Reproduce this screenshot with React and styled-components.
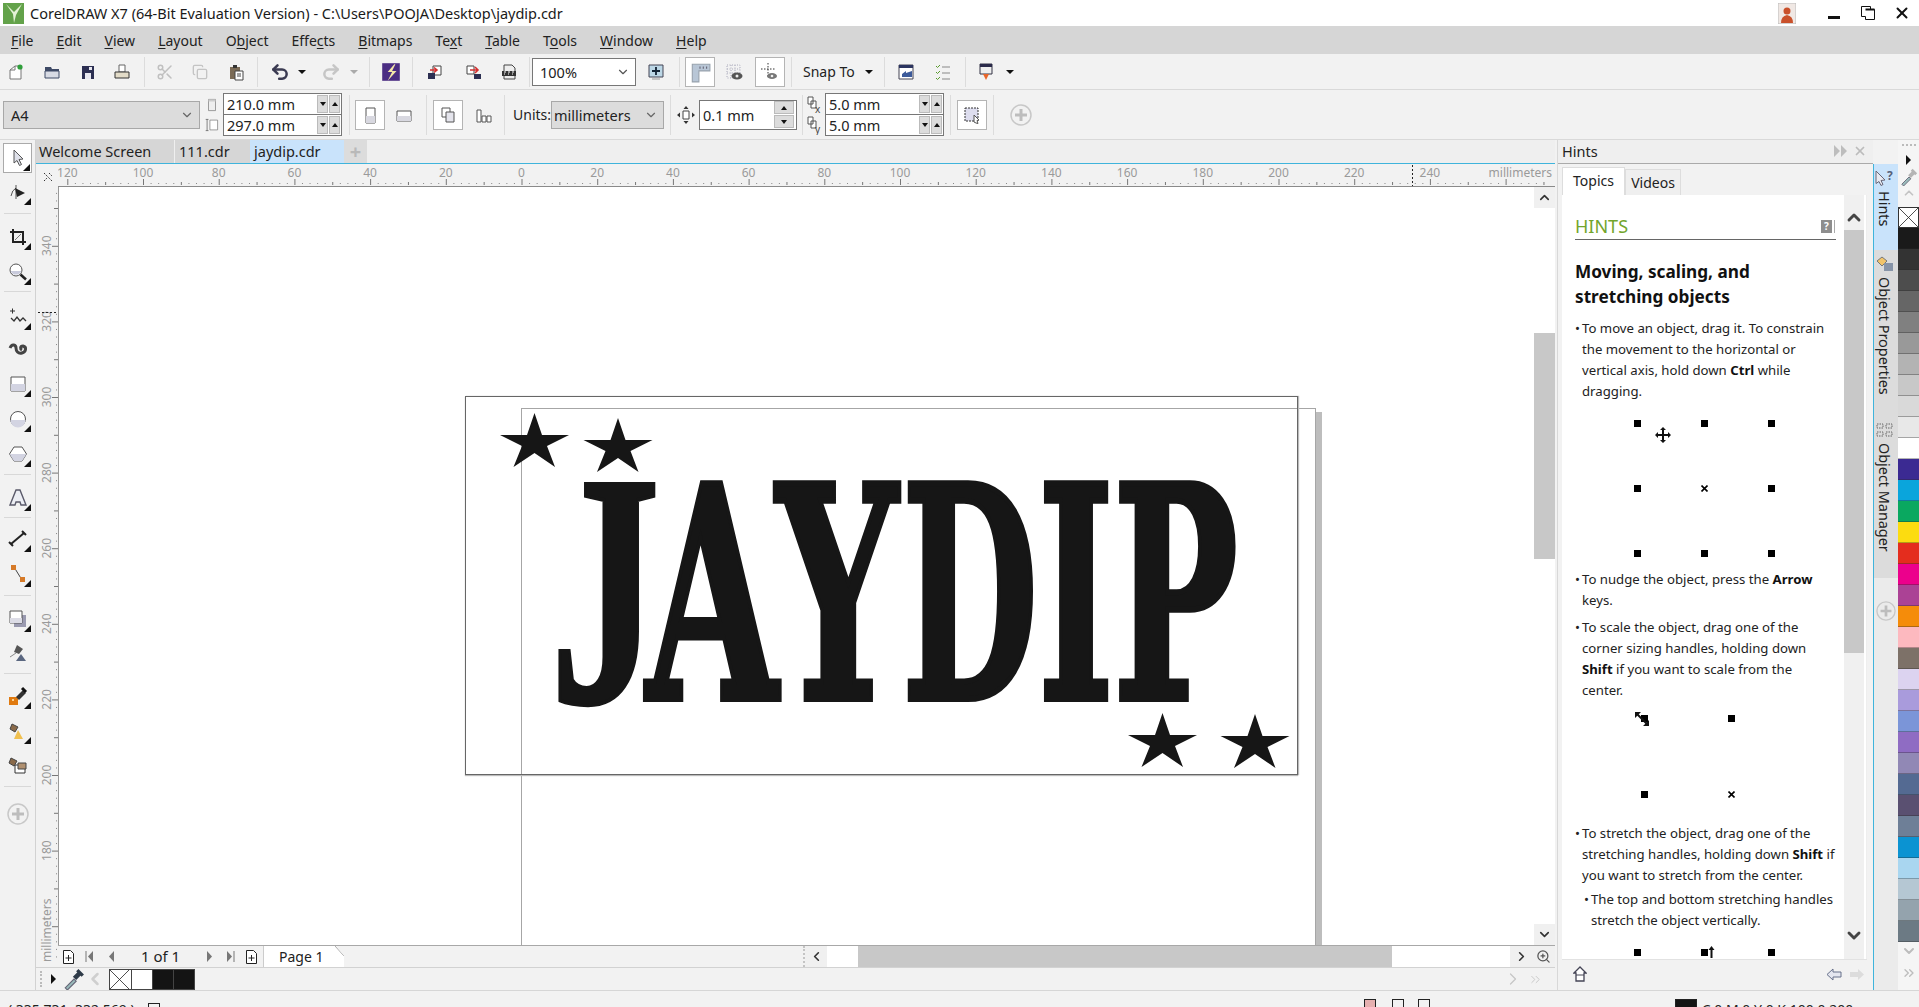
import React from 'react';
import styled, { createGlobalStyle } from 'styled-components';
import { Scissors, Undo2, Redo2, ChevronUp, ChevronDown, ChevronLeft, ChevronRight, ChevronsRight, X, Copy, ZoomIn } from 'lucide-react';

const UI = '"Noto Sans", "Open Sans", sans-serif';

const Global = createGlobalStyle`
  html, body { margin: 0; padding: 0; background: #f2f2f2; overflow: hidden; }
  * { box-sizing: border-box; }
  #root { width: 1919px; height: 1007px; }
`;

const Shell = styled.div`
  width: 1919px; height: 1007px; overflow: hidden; display: flex; flex-direction: column;
  font: 14px ${UI}; color: #222; background: #f2f2f2;
`;

/* title + menu */
const TitleBar = styled.div`
  height: 26px; background: #fff; display: flex; align-items: center; padding-left: 3px; flex: none;
`;
const TitleText = styled.div`margin-left: 6px; font-size: 14.5px; white-space: nowrap; flex: 1; color: #1a1a1a;`;
const WinBtn = styled.div`
  width: ${p => p.$w}px; height: 26px; display: flex; align-items: center; justify-content: center; flex: none;
  margin-left: ${p => p.$ml || 0}px;
`;
const MenuBar = styled.div`
  height: 28px; background: #d6d6d6; display: flex; align-items: center; gap: 23px; padding-left: 11px; flex: none;
  font-size: 14px; color: #222;
  u { text-underline-offset: 2px; }
`;

/* toolbars */
const Bar = styled.div`
  height: ${p => p.$h}px; flex: none; display: flex; align-items: center; background: #f2f2f2;
  border-bottom: 1px solid #d9d9d9;
`;
const Slot = styled.div`
  width: ${p => p.$w}px; margin-left: ${p => p.$ml || 0}px; height: ${p => p.$tall ? 43 : 30}px; flex: none;
  display: flex; flex-direction: ${p => p.$tall ? 'column' : 'row'}; align-items: center; justify-content: center;
  ${p => p.$on && 'background: #fff; border: 1px solid #b4b4b4;'}
`;
const Sep = styled.div`
  width: 1px; height: ${p => p.$h || 30}px; background: #dcdcdc; flex: none; margin-left: ${p => p.$ml || 0}px;
`;
const Drop = styled.div`
  width: ${p => p.$w}px; height: ${p => p.$h}px; margin-left: ${p => p.$ml || 0}px; flex: none;
  background: ${p => p.$bg}; border: 1px solid ${p => p.$line};
  display: flex; align-items: center; justify-content: space-between; padding: 0 5px 0 ${p => p.$pl || 7}px; font-size: 14.5px;
`;
const Caret = styled.div`
  width: 0; height: 0; border-left: 4px solid transparent; border-right: 4px solid transparent;
  border-top: 4px solid ${p => p.$c || '#111'}; flex: none;
`;
const SnapLabel = styled.div`width: 52px; margin-left: 11px; font-size: 14px; white-space: nowrap; flex: none;`;
const UnitsLabel = styled.div`width: 38px; margin-left: 8px; font-size: 14px; flex: none;`;

const SpinBox = styled.div`
  width: ${p => p.$w}px; margin-left: ${p => p.$ml || 0}px; height: 43px; flex: none;
  border: 1px solid #777; background: #fff; display: flex; flex-direction: column;
`;
const SpinRow = styled.div`
  flex: 1; display: flex; align-items: center; padding-left: 3px; font-size: 14.5px; justify-content: space-between;
  & + & { border-top: 1px solid #777; }
`;
const SpinBtns = styled.div`display: flex; gap: 1px; padding-right: 1px;`;
const SpinBtn = styled.div`
  width: 11px; height: 18px; background: #dcdcdc; border: 1px solid #bbb;
  display: flex; align-items: center; justify-content: center;
`;
const Tri = styled.div`
  width: 0; height: 0; border-left: 3.5px solid transparent; border-right: 3.5px solid transparent;
  ${p => p.$up ? 'border-bottom: 4px solid #111;' : 'border-top: 4px solid #111;'}
`;
const Nudge = styled.div`
  width: 98px; height: 30px; margin-left: 2px; flex: none; border: 1px solid #777; background: #fff;
  display: flex; align-items: center; justify-content: space-between; padding-left: 3px; font-size: 14.5px;
`;
const NudgeBtns = styled.div`display: flex; flex-direction: column; gap: 1px; padding-right: 2px;`;
const NudgeBtn = styled.div`
  width: 20px; height: 13px; background: #dcdcdc; border: 1px solid #bbb;
  display: flex; align-items: center; justify-content: center;
`;
const Gap = styled.div`height: ${p => p.$h}px; flex: none;`;

/* workspace */
const Workspace = styled.div`flex: 1; display: flex; min-height: 0;`;
const Toolbox = styled.div`
  width: 36px; flex: none; padding-top: 1px; display: flex; flex-direction: column; align-items: stretch;
  border-right: 1px solid #d2d2d2; background: #f2f2f2;
`;
const Tool = styled.div`
  height: ${p => p.$h}px; position: relative; display: flex; align-items: center; justify-content: center; flex: none;
  ${p => p.$on && 'background: #fff; border: 1px solid #aaa; margin: 2px 3px 2px 3px; height: 30px;'}
  ${p => p.$more && `&::after {
    content: ''; position: absolute; right: ${p.$on ? 1 : 4}px; top: calc(50% + 6px);
    border-left: 7px solid transparent; border-bottom: 7px solid #111;
  }`}
`;
const ToolSep = styled.div`
  height: 1px; background: #d8d8d8; margin: ${p => p.$t}px 4px ${p => p.$b}px 4px; flex: none;
`;

const DocColumn = styled.div`width: 1519px; flex: none; display: flex; flex-direction: column;`;
const TabRow = styled.div`
  height: 24px; flex: none; display: flex; background: #efefef; border-bottom: 1px solid #3fb4dc;
`;
const DocTab = styled.div`
  width: ${p => p.$w}px; flex: none; background: ${p => p.$on ? '#c9e3fb' : '#d6d6d6'};
  margin-right: ${p => p.$gap || 0}px; padding: 0 0 2px ${p => p.$pad || 3}px; display: flex; align-items: center;
  font-size: 14.5px; white-space: nowrap;
`;
const PlusTab = styled.div`
  width: 23px; flex: none; background: #dcdcdc; display: flex; align-items: center; justify-content: center;
  color: #b9b9b9; font-size: 20px; font-weight: 700; line-height: 1;
`;
const DocBody = styled.div`flex: 1; display: flex; min-height: 0;`;
const VRuler = styled.svg`width: 22px; flex: none; display: block;`;
const DocMain = styled.div`flex: 1; display: flex; flex-direction: column; min-width: 0;`;
const HRuler = styled.svg`height: 23px; width: 100%; flex: none; display: block; border-bottom: 1px solid #8a8a8a;`;
const CanvasRow = styled.div`flex: 1; display: flex; min-height: 0;`;
const Canvas = styled.div`
  flex: 1; position: relative; overflow: hidden; background: #fff; border-left: 1px solid #999;
`;
const Page = styled.div`
  position: absolute; left: 462px; top: 221px; width: 795px; height: 900px;
  border: 1px solid #a6a6a6; background: #fff;
`;
const PageShadow = styled.div`
  position: absolute; left: 1257px; top: 225px; width: 6px; height: 900px; background: #bdbdbd;
`;
const ObjectFrame = styled.div`
  position: absolute; left: 406px; top: 209px; width: 833px; height: 379px;
  border: 1px solid #666; box-shadow: 0 1px 1px #bbb, 1px 0 1px #bbb;
`;
const Artwork = styled.svg`position: absolute; left: 0; top: 0; width: 1476px; height: 758px;`;

const VScroll = styled.div`
  width: 21px; flex: none; background: #fff; display: flex; flex-direction: column;
`;
const ScrollCap = styled.div`
  height: 21px; flex: none; background: #f0f0f0; display: flex; align-items: center; justify-content: center; color: #333;
`;
const VThumb = styled.div`height: 226px; background: #c8c8c8; flex: none;`;
const Grow = styled.div`flex: 1;`;

const PageBar = styled.div`
  height: 22px; flex: none; display: flex; align-items: stretch; background: #f2f2f2;
  border-top: 1px solid #a8a8a8;
`;
const NavIcon = styled.div`
  width: ${p => p.$w}px; flex: none; display: flex; align-items: center; justify-content: center;
`;
const PageCount = styled.div`
  width: 59px; margin-left: 20px; flex: none; font-size: 15px; display: flex; align-items: center; white-space: nowrap;
  padding-bottom: 1px;
`;
const PageTab = styled.div`
  width: 81px; flex: none; margin-left: 1px; background: #fff; position: relative;
  border-left: 1px solid #ccc; font-size: 14px; display: flex; align-items: center; padding: 0 0 1px 15px;
  clip-path: polygon(0 0, 90% 0, 100% 45%, 100% 100%, 0 100%);
`;
const TabFold = styled.svg`position: absolute; right: 0; top: 0;`;
const PageFill = styled.div`width: 461px; flex: none; background: #f2f2f2; border-right: 2px dotted #c4c4c4;`;
const HScroll = styled.div`flex: 1; display: flex; background: #fff; align-items: stretch;`;
const HCap = styled.div`
  width: ${p => p.$w}px; flex: none; background: #f0f0f0; display: flex; align-items: center; justify-content: center; color: #333;
`;
const HGap = styled.div`width: ${p => p.$w}px; flex: none;`;
const HThumb = styled.div`width: 534px; flex: none; background: #c8c8c8;`;

const ColorBar = styled.div`
  height: 23px; flex: none; display: flex; align-items: center; background: #f2f2f2;
  border-top: 1px solid #d2d2d2; padding-left: 4px;
`;
const Grip = styled.div`width: 2px; height: 16px; border-left: 2px dotted #bbb; flex: none;`;
const ArrowRight = styled.div`
  width: 0; height: 0; border-top: 5px solid transparent; border-bottom: 5px solid transparent;
  border-left: 5px solid #111; flex: none; margin: ${p => p.$mt || 0}px 0 0 ${p => p.$ml || 0}px;
`;
const DropperWrap = styled.div`margin: ${p => p.$mt || 0}px 0 0 ${p => p.$ml || 0}px; flex: none;`;
const Swatches = styled.div`display: flex; height: 21px; margin-left: 4px; border: 1px solid #444; flex: none;`;
const MiniSwatch = styled.div`
  width: 21px; background: ${p => p.$c}; flex: none; & + & { border-left: 1px solid #444; }
  display: flex; overflow: hidden;
`;
const ColorRight = styled.div`flex: 1; display: flex; justify-content: flex-end; align-items: center; gap: 5px; padding-right: 12px; color: #c6c6c6;`;

/* hints docker */
const Hints = styled.div`
  width: 316px; margin-left: 2px; flex: none; display: flex; flex-direction: column;
  border-left: 1px solid #d8d8d8; background: #f2f2f2;
`;
const HintsHead = styled.div`
  height: 24px; flex: none; display: flex; align-items: center; padding: 0 6px 2px 4px; font-size: 14.5px;
  justify-content: space-between; border-bottom: 1px solid #aaa; background: #efefef;
`;
const HeadBtns = styled.div`display: flex; align-items: center; gap: 5px; color: #bcbcbc;`;
const HintTabs = styled.div`height: 31px; flex: none; display: flex; align-items: flex-end; padding-left: 4px;`;
const HintTab = styled.div`
  height: ${p => p.$on ? 28 : 26}px; width: ${p => p.$w}px; flex: none; font-size: 14px; padding-bottom: ${p => p.$on ? 2 : 0}px;
  display: flex; align-items: center; justify-content: center; border: 1px solid #ddd; border-bottom: 0;
  background: ${p => p.$on ? '#fff' : '#efefef'};
`;
const HintBox = styled.div`
  height: 764px; flex: none; margin-left: 4px; margin-right: 6px; background: #fff; display: flex; overflow: hidden;
  border-right: 1px solid #eee;
`;
const HintContent = styled.div`
  width: 283px; flex: none; padding: 20px 9px 0 13px; overflow: hidden; height: 763px; font-size: 13.2px; line-height: 21px; color: #222;
`;
const HintTitle = styled.div`
  height: 25px; border-bottom: 1px solid #666; display: flex; justify-content: space-between; align-items: center;
  font-size: 18px; color: #72a52c; padding-bottom: 1px;
`;
const HelpMark = styled.div`
  width: 11px; height: 13px; background: #8e8e8e; color: #fff; font-size: 10px; line-height: 13px; text-align: center;
  font-weight: 700; box-shadow: 2px 0 0 #fff, 3px 0 0 #aaa; margin-right: 4px;
`;
const HintHeading = styled.h2`
  margin: 19px 0 9px; font-size: 17.2px; line-height: 25px; font-weight: 700; color: #111; white-space: nowrap;
`;
const Para = styled.div`
  display: flex; white-space: nowrap; margin-top: ${p => p.$t || 0}px; padding-left: ${p => p.$in || 0}px;
  b { font-weight: 700; color: #111; }
`;
const Dot = styled.span`width: 7px; flex: none;`;
const Figure = styled.div`
  display: grid; grid-template-columns: repeat(${p => p.$cols}, 7px); column-gap: ${p => p.$cg}px; row-gap: ${p => p.$rg}px;
  position: relative; margin: ${p => p.$t}px 0 ${p => p.$b}px ${p => p.$l}px; width: max-content;
`;
const Handle = styled.div`width: 7px; height: 7px; background: #000;`;
const Cross = styled.div`
  width: 7px; height: 7px; display: flex; align-items: center; justify-content: center;
`;
const Cursor = styled.div`position: absolute; left: ${p => p.$x}px; top: ${p => p.$y}px;`;
const HintScroll = styled.div`
  width: 20px; flex: none; margin-left: -1px; background: #f0f0f0; display: flex; flex-direction: column; color: #444;
`;
const HintCap = styled.div`
  height: ${p => p.$h}px; flex: none; display: flex; align-items: center; justify-content: center;
  padding-top: ${p => p.$pt || 0}px;
`;
const HintThumb = styled.div`height: 423px; flex: none; background: #c8c8c8;`;
const HintFoot = styled.div`
  height: 29px; flex: none; margin: 0 6px 0 4px; border-top: 1px solid #e2e2e2; background: #f2f2f2;
  display: flex; align-items: center; justify-content: space-between; padding: 0 2px 0 11px;
`;
const FootRight = styled.div`display: flex; gap: 7px; align-items: center;`;

/* dock tabs + palette */
const Dock = styled.div`
  width: 25px; flex: none; border-left: 1px solid #3fb4dc; margin-top: 24px; display: flex; flex-direction: column;
  background: #ebebeb;
`;
const DockTab = styled.div`
  height: ${p => p.$h}px; flex: none; background: ${p => p.$on ? '#c9e3fb' : '#dcdcdc'};
  display: flex; flex-direction: column; align-items: center; padding: 6px 3px 0 0; font-size: 14.4px;
`;
const DockText = styled.div`
  writing-mode: vertical-rl; margin-top: 5px; white-space: nowrap; color: #222;
`;
const DockPlus = styled.div`margin-top: 23px; display: flex; justify-content: center;`;
const Palette = styled.div`width: 21px; flex: none; display: flex; flex-direction: column; background: #f5f5f5;`;
const PaletteTop = styled.div`height: 67px; flex: none; display: flex; flex-direction: column; align-items: center; color: #c4c4c4;`;
const PalDots = styled.div`width: 14px; height: 2px; margin-top: 4px; border-top: 2px dotted #bbb; flex: none;`;
const Swatch = styled.div`
  height: 21px; flex: none; background: ${p => p.$c}; border-bottom: 1px solid rgba(40,40,40,.35); overflow: hidden;
  ${p => p.$none && 'background: #fff; border: 1px solid #333;'}
`;
const PalFoot = styled.div`display: flex; flex-direction: column; align-items: center; color: #bdbdbd; gap: 6px; margin-top: 1px;`;

const StatusBar = styled.div`
  height: 17px; flex: none; overflow: hidden; display: flex; background: #f2f2f2; border-top: 1px solid #d6d6d6;
  padding: 9px 0 0 8px; font-size: 14px; line-height: 20px; white-space: nowrap;
`;
const StatusBox = styled.div`
  width: ${p => p.$w || 12}px; height: ${p => p.$w ? 20 : 14}px; border: 1.5px solid #222; flex: none; margin: ${p => p.$t || 3}px 0 0 ${p => p.$ml}px;
  ${p => p.$c && `background: ${p.$c};`}
`;
const StatusText = styled.div`margin-left: ${p => p.$ml || 0}px; flex: none;`;

/* small drawings */
const Ic = ({ s = 20, children }) => <svg width={s} height={s} viewBox="0 0 20 20" style={{ display: 'block' }}>{children}</svg>;

const NewIcon = () => <Ic><path d="M4 8l5-4h6v13H4z" fill="#fff" stroke="#777" /><path d="M4 8h5V4" fill="none" stroke="#777" /><circle cx="14" cy="5" r="2.6" fill="#2e9e3a" /></Ic>;
const OpenIcon = () => <Ic><path d="M3 5h6l1 2h7v2H3z" fill="#3e4a66" /><path d="M3 9h14v7H3z" fill="#d8dbe4" stroke="#3e4a66" /></Ic>;
const SaveIcon = () => <Ic><path d="M4 4h12v13H4z" fill="#2c2f52" /><path d="M11 5h3v3h-3z" fill="#e8e8f0" /><path d="M7 11h6v6H7z" fill="#e8e8f0" /></Ic>;
const PrintIcon = () => <Ic><path d="M7 3h6v7H7z" fill="#fff" stroke="#666" /><path d="M3 10h14v6H3z" fill="#e3dcc8" stroke="#333" /></Ic>;
const CopyIcon = () => <Copy size={16} color="#c4c4c4" />;
const PasteIcon = () => <Ic><path d="M4 5h10v12H4z" fill="#7a6a55" /><path d="M7 3h4v3H7z" fill="#333" /><path d="M9 9h8v9H9z" fill="#fff" stroke="#444" /><path d="M11 12h4M11 14h4" stroke="#444" /></Ic>;
const CorelIcon = () => <Ic s={22}><path d="M2 2h16v16H2z" fill="#4b2d83" /><path d="M13 3L7 10h4l-4 8 8-9h-4l3-6z" fill="#f4e7a8" /></Ic>;
const ImportIcon = () => <Ic><path d="M8 4h8v9H8z" fill="#fff" stroke="#444" /><path d="M3 11h7v6H3z" fill="#2c2f52" /><path d="M5 8h6M9 5.500l3 2.500-3 2.500" fill="none" stroke="#d43030" strokeWidth="1.600" /></Ic>;
const ExportIcon = () => <Ic><path d="M3 4h7v8H3z" fill="#fff" stroke="#444" /><path d="M10 12h7v5h-7z" fill="#2c2f52" /><path d="M6 8h7M11 5l3 3-3 3" fill="none" stroke="#d43030" strokeWidth="1.600" /></Ic>;
const PdfIcon = () => <Ic><path d="M5 3h8l3 3v11H5z" fill="#eee" stroke="#444" /><path d="M3 9h14v5H3z" fill="#333" /><path d="M5 10h2M9 10h2M13 10h2M5 12h1M9 12h1M13 12h1" stroke="#fff" /></Ic>;
const FitIcon = () => <Ic><path d="M3 3h14v12H3z" fill="#bcd7e6" stroke="#445" /><path d="M10 5v8M6 9h8" stroke="#123" strokeWidth="1.800" /><path d="M6 17h8" stroke="#999" /></Ic>;
const RulerIcon = () => <Ic s={22}><path d="M3 3h16v6H9v10H3z" fill="#b8c6d6" stroke="#98a2ad" /><path d="M10 5v2M13 5v2M16 5v2" stroke="#667" /></Ic>;
const GridEye = () => <Ic><path d="M2 3h13v13H2z" fill="none" stroke="#aab" strokeDasharray="1 1.500" /><path d="M6 3v13M10 3v13M2 7h13M2 11h13" stroke="#aab" strokeDasharray="1 1.500" /><ellipse cx="12" cy="14" rx="5.500" ry="3.500" fill="#555" /><circle cx="12" cy="14" r="1.500" fill="#eee" /></Ic>;
const GuideEye = () => <Ic><path d="M8 1v15M1 7h15" stroke="#333" strokeDasharray="1.500 1.500" /><ellipse cx="12" cy="14" rx="5" ry="3" fill="#777" /><circle cx="12" cy="14" r="1.300" fill="#eee" /></Ic>;
const OptionsIcon = () => <Ic><path d="M3 3h14v14H3z" fill="#fff" stroke="#445" /><path d="M3 3h14v3H3z" fill="#2c3560" /><path d="M6 15v-3l4-3v2l6-2v6z" fill="#3c5a9a" /></Ic>;
const ChecklistIcon = () => <Ic><path d="M3 4l1.500 1.500L7 3M3 10l1.500 1.500L7 9M3 16l1.500 1.500L7 15" fill="none" stroke="#5a9a2e" /><path d="M9 5h8M9 11h8M9 17h8" stroke="#888" /></Ic>;
const LaunchIcon = () => <Ic><path d="M4 2h12v10H4z" fill="#eee" stroke="#334" /><path d="M4 2h12v3H4z" fill="#2a2a4a" /><path d="M7 12h6l-3 6z" fill="#e8662a" /></Ic>;
const PageHigh = () => <Ic s={14}><path d="M5 2h10v16H5z" fill="#eee" stroke="#777" /><path d="M5 2h10v3H5z" fill="#ccc" /></Ic>;
const PageWide = () => <Ic s={14}><path d="M7 3h11v14H7z" fill="#fff" stroke="#777" /><path d="M3 2v16M1 2h4M1 18h4" stroke="#555" fill="none" /></Ic>;
const Portrait = () => <Ic><path d="M6 3h9v15H6z" fill="#fff" stroke="#555" /><path d="M6 11h9v7H6z" fill="#d8d8e0" /></Ic>;
const Landscape = () => <Ic><path d="M3 6h14v10H3z" fill="#fff" stroke="#555" /><path d="M3 11h14v5H3z" fill="#d8d8e0" /></Ic>;
const AllPages = () => <Ic><path d="M4 3h8v9H4z" fill="#fff" stroke="#555" /><path d="M8 7h8v10H8z" fill="#e4e4ec" stroke="#555" /></Ic>;
const CurPage = () => <Ic><path d="M3 5h4v12H3zM8 11h4v6H8zM13 11h4v6h-4z" fill="#fff" stroke="#555" /></Ic>;
const NudgeIcon = () => <Ic><path d="M7 6h6v8H7z" fill="#fff" stroke="#444" /><path d="M10 1l2.500 3h-5zM10 19l2.500-3h-5zM1 10l3-2.500v5zM19 10l-3-2.500v5z" fill="#333" /></Ic>;
const DupIcon = ({ axis }) => <svg width="14" height="20" viewBox="0 0 14 20"><path d="M1 2h5v7H1zM4 6h5v7H4z" fill="#fff" stroke="#555" /><text x="8" y="18" fontSize="10" fontFamily="Noto Sans" fill="#444">{axis}</text></svg>;
const TreatIcon = () => <Ic><path d="M3 3h13v13H3z" fill="#dde" stroke="#333" strokeDasharray="2 1" /><path d="M12 10l5 5-2 .5 1 3-2-.5-2-1z" fill="#fff" stroke="#555" /></Ic>;
const PlusRound = ({ s = 22 }) => <svg width={s} height={s} viewBox="0 0 22 22"><circle cx="11" cy="11" r="10" fill="none" stroke="#c8c8c8" strokeWidth="1.500" /><path d="M11 5v12M5 11h12" stroke="#bdbdbd" strokeWidth="3" /></svg>;
const Pick = () => <Ic><path d="M6 2l9 9-4 .5 2.500 5-2 1-2.500-5L6 15z" fill="#dfe1ea" stroke="#555" /></Ic>;
const ShapeTool = () => <Ic><path d="M8 3v14M3 14q1-6 5-8" fill="none" stroke="#555" /><path d="M7 6l10 5-8 4z" fill="#222" /></Ic>;
const CropTool = () => <Ic><path d="M5 2v13h13M2 5h13v13" fill="none" stroke="#222" strokeWidth="2" /><path d="M7 13l6-6" stroke="#777" /></Ic>;
const ZoomTool = () => <Ic><circle cx="8" cy="8" r="6" fill="#fff" stroke="#555" /><path d="M2.500 9h11a6 6 0 0 1-11 0z" fill="#c9cbdc" /><path d="M12.500 12.500l5.500 5" stroke="#222" strokeWidth="2.500" /></Ic>;
const FreeTool = () => <Ic><path d="M2 4h5M4.500 1.500v5" stroke="#333" /><path d="M3 11l3 3 3-4 3 4 3-3 3 3" fill="none" stroke="#333" strokeWidth="1.300" /></Ic>;
const MediaTool = () => <Ic><path d="M2 8c2-5 6-3 6 0s2 6 6 5 5-6 1-7c-3 0-3 3-1 4" fill="none" stroke="#444" strokeWidth="3" /></Ic>;
const RectTool = () => <Ic><path d="M3 3h14v14H3z" fill="#fff" stroke="#555" /><path d="M3 10h14v7H3z" fill="#d3d4e2" /></Ic>;
const EllipseTool = () => <Ic><circle cx="10" cy="10" r="7.500" fill="#fff" stroke="#555" /><path d="M2.500 11h15a7.500 7.500 0 0 1-15 0z" fill="#d3d4e2" /></Ic>;
const PolyTool = () => <Ic><path d="M6 3h8l4.500 7-4.500 7H6l-4.500-7z" fill="#fff" stroke="#555" /><path d="M1.500 10h17L14 17H6z" fill="#d3d4e2" /></Ic>;
const TextTool = () => <Ic><path d="M2 17L8 2h4l6 15h-5l-1-3H8l-1 3z" fill="#eceef4" stroke="#5a5a6a" strokeWidth="1.400" /></Ic>;
const DimTool = () => <Ic><path d="M3 15L16 4" stroke="#222" strokeWidth="2" /><path d="M1 13l4 4M14 2l4 4" stroke="#222" strokeWidth="2" /></Ic>;
const ConnTool = () => <Ic><path d="M6 3l8 13" stroke="#444" /><path d="M3 1h5v5H3zM12 13h5v5h-5z" fill="#d67a28" /></Ic>;
const ShadowTool = () => <Ic><path d="M6 6h12v12H6z" fill="#9a9ab0" /><path d="M2 2h12v12H2z" fill="#fff" stroke="#555" /><path d="M2 9h12v5H2z" fill="#dcdce6" /></Ic>;
const GlassTool = () => <Ic><path d="M9 2l6 4-4 5-5-2z" fill="#555" /><path d="M2 14l6-4" stroke="#888" /><path d="M13 11l5 7H8z" fill="#5a6780" /></Ic>;
const DropTool = () => <Ic><path d="M1 11h9v8H1z" fill="#e07a10" /><path d="M4 13h2v2H4z" fill="#f8d090" /><path d="M8 11l7-7 3 3-7 7z" fill="#333" /><path d="M14 2l4 4" stroke="#111" strokeWidth="3" /></Ic>;
const FillTool = () => <Ic><path d="M4 3l6 3-3 5-5-3z" fill="#8a6a4a" stroke="#444" /><path d="M10 9l5 9H6z" fill="#f0c050" /></Ic>;
const SmartTool = () => <Ic><path d="M3 3l6 3-3 5-5-3z" fill="#8a6a4a" stroke="#444" /><path d="M7 10h10v8H7z" fill="#fff" stroke="#333" /><path d="M10 8h8v6h-8z" fill="#b09070" stroke="#444" /></Ic>;
const Dropper = ({ s = 20, c = '#2e3a48' }) => <Ic s={s}><path d="M2 18l8-8 2 2-8 8z" fill="#9bb" stroke="#667" /><path d="M9 8l5-5 3 3-5 5z" fill={c} /><path d="M13 2l5 5" stroke={c} strokeWidth="3" /></Ic>;
const AddPage = () => <svg width="11" height="14" viewBox="0 0 11 14"><path d="M.5.500h7l3 3v10H.5z" fill="#fff" stroke="#222" /><path d="M5.500 5v6M2.500 8h6" stroke="#222" /></svg>;
const TriLeft = ({ bar, c = '#777' }) => <svg width="9" height="11" viewBox="0 0 9 11">{bar && <path d="M1 0v11" stroke={c} />}<path d="M8 0v11L3 5.500z" fill={c} /></svg>;
const TriRight = ({ bar, c = '#777' }) => <svg width="9" height="11" viewBox="0 0 9 11">{bar && <path d="M8 0v11" stroke={c} />}<path d="M1 0v11L6 5.500z" fill={c} /></svg>;
const None = ({ w = 19, h = 19 }) => <svg width={w} height={h} viewBox="0 0 19 19" preserveAspectRatio="none"><path d="M0 0l19 19M19 0L0 19" stroke="#222" strokeWidth=".8" /></svg>;

const TicksH = () => {
  const ticks = [];
  for (let v = -120; v <= 270; v += 2) {
    const x = 463.5 + v * 3.785;
    const big = v % 20 === 0, mid = v % 10 === 0;
    ticks.push(<rect key={v} x={x} y={big ? 15 : mid ? 18 : 19} width="1" height={big ? 6 : mid ? 3 : 1} fill={big || mid ? '#777' : '#888'} />);
    if (big && Math.abs(v) <= 240) {
      ticks.push(<text key={'t' + v} x={x} y="13" textAnchor="middle" fontSize="12" fontFamily="Noto Sans" fill="#9a9a9a">{Math.abs(v)}</text>);
    }
  }
  return (
    <HRuler viewBox="0 0 1497 22" preserveAspectRatio="none">
      {ticks}
      <rect x="1435" y="0" width="62" height="15" fill="#f2f2f2" />
      <text x="1494" y="13" textAnchor="end" fontSize="12" fontFamily="Noto Sans" fill="#9a9a9a">millimeters</text>
      <path d="M1354.500 1v21" stroke="#222" strokeDasharray="2 2" />
    </HRuler>
  );
};

const TicksV = () => {
  const ticks = [];
  for (let v = 364; v >= 146; v -= 2) {
    const y = 233 + (300 - v) * 3.78;
    if (y < 24 || y > 798) continue;
    const big = v % 20 === 0, mid = v % 10 === 0;
    ticks.push(<rect key={v} x={big ? 16 : mid ? 18 : 20} y={y} width={big ? 6 : mid ? 4 : 1} height="1" fill={big || mid ? '#777' : '#888'} />);
    if (big && v >= 180) {
      ticks.push(<text key={'t' + v} transform={`translate(15 ${y}) rotate(-90)`} textAnchor="middle" fontSize="12" fontFamily="Noto Sans" fill="#9a9a9a">{v}</text>);
    }
  }
  return (
    <VRuler viewBox="0 0 22 803" height="803">
      {ticks}
      <text transform="translate(15 798) rotate(-90)" fontSize="12" fontFamily="Noto Sans" fill="#9a9a9a">millimeters</text>
      <path d="M2 148.500h20" stroke="#222" strokeDasharray="2 2" />
      <path d="M8 9l8 8M8 17l3-3M13 9l3 3" stroke="#333" strokeDasharray="1.500 1" fill="none" />
    </VRuler>
  );
};

const starShape = '34.5,0 42,22 69,22 47,33 55,54 34.5,40 13.5,54 22,33 0,22 27,22';
const stars = [[441, 226], [524.5, 231], [1069, 526], [1161.5, 527]];
/* each letter is fitted to its own width, the J is a Times-like glyph because its hook stays near the baseline */
const letters = [
  ['A', 587, 132], ['Y', 717, 122], ['D', 843, 136], ['I', 979, 76], ['P', 1054, 125],
];

const Artboard = () => (
  <Artwork viewBox="0 0 1476 758">
    {stars.map(([x, y]) => <polygon key={x} transform={`translate(${x} ${y})`} points={starShape} fill="#161616" />)}
    <text x="491" y="515" fontFamily='"Liberation Serif", serif' fontWeight="700" fontSize="333" fill="#161616"
      stroke="#161616" strokeWidth="4" textLength="110" lengthAdjust="spacingAndGlyphs">J</text>
    {letters.map(([l, x, w]) => (
      <text key={l} x={x} y="512" fontFamily='"DejaVu Serif", serif' fontWeight="700" fontSize="296" fill="#161616"
        stroke="#161616" strokeWidth="6" textLength={w} lengthAdjust="spacingAndGlyphs">{l}</text>
    ))}
  </Artwork>
);

const paletteColors = ['#1a1a1a', '#333333', '#4d4d4d', '#666666', '#808080', '#999999', '#b3b3b3', '#c8c8c8', '#d9d9d9', '#e8e8e8', '#ffffff',
  '#3b2a92', '#0aa5dc', '#0aa860', '#fcdc10', '#e42d1e', '#ec008c', '#ab4295', '#f58c0a', '#fdb9bf', '#7d7168', '#dcd3f0',
  '#a99bdc', '#7b95d8', '#8f6cc3', '#9188b5', '#546a92', '#5a5071', '#6e7f97', '#0b93d2', '#a9d6f0', '#b5c7d3', '#94a3ad', '#6c7a84'];

const Spin = ({ value }) => (
  <SpinRow>{value}<SpinBtns><SpinBtn><Tri /></SpinBtn><SpinBtn><Tri $up /></SpinBtn></SpinBtns></SpinRow>
);

const X3 = () => <Cross><svg width="7" height="7" viewBox="0 0 7 7"><path d="M.5.500l6 6M6.500.500l-6 6" stroke="#000" strokeWidth="1.600" /></svg></Cross>;

export default function App() {
  return (
    <Shell>
      <Global />
      <TitleBar>
        <svg width="21" height="21" viewBox="0 0 21 21"><path d="M0 0h21v21H0z" fill="#63a24a" /><path d="M3 1l7 10 1 9 2-8 6-11-8 8z" fill="#e4f2d6" /></svg>
        <TitleText>CorelDRAW X7 (64-Bit Evaluation Version) - C:\Users\POOJA\Desktop\jaydip.cdr</TitleText>
        <WinBtn $w={34}><svg width="18" height="21" viewBox="0 0 18 21"><path d="M0 0h18v21H0z" fill="#f0e8e4" stroke="#bbb" /><circle cx="9" cy="8" r="3.500" fill="#c9502a" /><path d="M3 20q0-7 6-8 6 1 6 8z" fill="#c9502a" /></svg></WinBtn>
        <WinBtn $w={35} $ml={12}><svg width="12" height="12" viewBox="0 0 12 12"><path d="M0 9h12v3H0z" fill="#111" /></svg></WinBtn>
        <WinBtn $w={33}><svg width="14" height="14" viewBox="0 0 14 14"><path d="M.5.500h9v3h4v10h-9v-3h-4z" fill="none" stroke="#111" /><path d="M4.500 3.500h9" stroke="#111" strokeWidth="2" /></svg></WinBtn>
        <WinBtn $w={35}><X size={18} color="#111" strokeWidth={2.6} /></WinBtn>
      </TitleBar>
      <MenuBar>
        <span><u>F</u>ile</span><span><u>E</u>dit</span><span><u>V</u>iew</span><span><u>L</u>ayout</span>
        <span>O<u>b</u>ject</span><span>Effe<u>c</u>ts</span><span><u>B</u>itmaps</span><span>Te<u>x</u>t</span>
        <span><u>T</u>able</span><span>T<u>o</u>ols</span><span><u>W</u>indow</span><span><u>H</u>elp</span>
      </MenuBar>

      <Bar $h={36}>
        <Slot $w={32}><NewIcon /></Slot>
        <Slot $w={40}><OpenIcon /></Slot>
        <Slot $w={32}><SaveIcon /></Slot>
        <Slot $w={36}><PrintIcon /></Slot>
        <Sep $ml={4} />
        <Slot $w={40}><Scissors size={18} color="#c0c0c0" /></Slot>
        <Slot $w={30}><CopyIcon /></Slot>
        <Slot $w={42}><PasteIcon /></Slot>
        <Sep />
        <Slot $w={32} $ml={6}><Undo2 size={20} color="#3b3b52" strokeWidth={3} /></Slot>
        <Slot $w={12}><Caret /></Slot>
        <Slot $w={32} $ml={7}><Redo2 size={20} color="#c6c6c6" strokeWidth={3} /></Slot>
        <Slot $w={12} $ml={1}><Caret $c="#aaa" /></Slot>
        <Sep $ml={9} />
        <Slot $w={42}><CorelIcon /></Slot>
        <Sep />
        <Slot $w={44}><ImportIcon /></Slot>
        <Slot $w={34}><ExportIcon /></Slot>
        <Slot $w={35}><PdfIcon /></Slot>
        <Sep $ml={3} />
        <Drop $w={104} $h={28} $ml={2} $bg="#fff" $line="#777">100%<ChevronDown size={14} color="#555" /></Drop>
        <Slot $w={39}><FitIcon /></Slot>
        <Sep $ml={4} />
        <Slot $w={30} $ml={5} $on><RulerIcon /></Slot>
        <Slot $w={40}><GridEye /></Slot>
        <Slot $w={30} $on><GuideEye /></Slot>
        <Sep $ml={6} />
        <SnapLabel>Snap To</SnapLabel>
        <Slot $w={28}><Caret /></Slot>
        <Sep $ml={1} />
        <Slot $w={42}><OptionsIcon /></Slot>
        <Slot $w={32}><ChecklistIcon /></Slot>
        <Sep $ml={6} />
        <Slot $w={40}><LaunchIcon /></Slot>
        <Caret />
      </Bar>

      <Bar $h={50}>
        <Drop $w={197} $h={28} $ml={3} $bg="#dcdcdc" $line="#a8a8a8">A4<ChevronDown size={14} color="#666" /></Drop>
        <Slot $w={23} $tall><PageHigh /><Gap $h={6} /><PageWide /></Slot>
        <SpinBox $w={119}><Spin value="210.0 mm" /><Spin value="297.0 mm" /></SpinBox>
        <Sep $ml={7} $h={40} />
        <Slot $w={30} $ml={5} $on><Portrait /></Slot>
        <Slot $w={38}><Landscape /></Slot>
        <Sep $ml={3} $h={40} />
        <Slot $w={30} $ml={6} $on><AllPages /></Slot>
        <Slot $w={41}><CurPage /></Slot>
        <Sep $h={40} />
        <UnitsLabel>Units:</UnitsLabel>
        <Drop $w={113} $h={28} $pl={2} $bg="#dcdcdc" $line="#a8a8a8">millimeters<ChevronDown size={14} color="#666" /></Drop>
        <Sep $ml={6} $h={40} />
        <Slot $w={22} $ml={4}><NudgeIcon /></Slot>
        <Nudge>0.1 mm<NudgeBtns><NudgeBtn><Tri $up /></NudgeBtn><NudgeBtn><Tri /></NudgeBtn></NudgeBtns></Nudge>
        <Sep $ml={5} $h={40} />
        <Slot $w={22} $tall><DupIcon axis="x" /><DupIcon axis="y" /></Slot>
        <SpinBox $w={119}><Spin value="5.0 mm" /><Spin value="5.0 mm" /></SpinBox>
        <Sep $ml={6} $h={40} />
        <Slot $w={30} $ml={6} $on><TreatIcon /></Slot>
        <Sep $ml={6} $h={40} />
        <Slot $w={54}><PlusRound /></Slot>
      </Bar>

      <Workspace>
        <Toolbox>
          <Tool $h={35} $on $more><Pick /></Tool>
          <Tool $h={33} $more><ShapeTool /></Tool>
          <ToolSep $t={5} $b={5} />
          <Tool $h={35} $more><CropTool /></Tool>
          <Tool $h={35} $more><ZoomTool /></Tool>
          <ToolSep $t={2} $b={7} />
          <Tool $h={35} $more><FreeTool /></Tool>
          <Tool $h={31}><MediaTool /></Tool>
          <Tool $h={38} $more><RectTool /></Tool>
          <Tool $h={32} $more><EllipseTool /></Tool>
          <Tool $h={38} $more><PolyTool /></Tool>
          <ToolSep $t={1} $b={5} />
          <Tool $h={35} $more><TextTool /></Tool>
          <ToolSep $t={2} $b={3} />
          <Tool $h={36} $more><DimTool /></Tool>
          <Tool $h={34} $more><ConnTool /></Tool>
          <ToolSep $t={4} $b={5} />
          <Tool $h={35} $more><ShadowTool /></Tool>
          <Tool $h={33}><GlassTool /></Tool>
          <ToolSep $t={4} $b={5} />
          <Tool $h={34} $more><DropTool /></Tool>
          <Tool $h={35} $more><FillTool /></Tool>
          <Tool $h={33}><SmartTool /></Tool>
          <ToolSep $t={5} $b={10} />
          <Tool $h={34}><PlusRound /></Tool>
        </Toolbox>

        <DocColumn>
          <TabRow>
            <DocTab $w={138} $gap={1}>Welcome Screen</DocTab>
            <DocTab $w={75} $pad={4}>111.cdr</DocTab>
            <DocTab $w={94} $on $pad={4}>jaydip.cdr</DocTab>
            <PlusTab>+</PlusTab>
          </TabRow>
          <DocBody>
            <TicksV />
            <DocMain>
              <TicksH />
              <CanvasRow>
                <Canvas>
                  <Page />
                  <PageShadow />
                  <ObjectFrame />
                  <Artboard />
                </Canvas>
                <VScroll>
                  <ScrollCap><ChevronUp size={15} strokeWidth={2.6} /></ScrollCap>
                  <Gap $h={125} />
                  <VThumb />
                  <Grow />
                  <ScrollCap><ChevronDown size={15} strokeWidth={2.6} /></ScrollCap>
                </VScroll>
              </CanvasRow>
              <PageBar>
                <NavIcon $w={21}><AddPage /></NavIcon>
                <NavIcon $w={21}><TriLeft bar /></NavIcon>
                <NavIcon $w={21}><TriLeft /></NavIcon>
                <PageCount>1 of 1</PageCount>
                <NavIcon $w={20}><TriRight /></NavIcon>
                <NavIcon $w={21}><TriRight bar /></NavIcon>
                <NavIcon $w={21}><AddPage /></NavIcon>
                <PageTab>Page 1<TabFold width="9" height="10" viewBox="0 0 9 10"><path d="M0 0l9 10" stroke="#aaa" /></TabFold></PageTab>
                <PageFill />
                <HScroll>
                  <HCap $w={22}><ChevronLeft size={15} strokeWidth={2.6} /></HCap>
                  <HGap $w={31} />
                  <HThumb />
                  <HGap $w={118} />
                  <HCap $w={22}><ChevronRight size={15} strokeWidth={2.6} /></HCap>
                  <HCap $w={23}><ZoomIn size={15} color="#555" /></HCap>
                </HScroll>
              </PageBar>
            </DocMain>
          </DocBody>
          <ColorBar>
            <Grip />
            <ArrowRight $ml={9} />
            <DropperWrap $ml={7}><Dropper s={22} /></DropperWrap>
            <ChevronLeft size={20} color="#cfcfcf" strokeWidth={3} />
            <Swatches>
              <MiniSwatch $c="#fff"><None /></MiniSwatch>
              <MiniSwatch $c="#fff" />
              <MiniSwatch $c="#141414" />
              <MiniSwatch $c="#141414" />
            </Swatches>
            <ColorRight><ChevronRight size={20} strokeWidth={1.5} /><ChevronsRight size={15} strokeWidth={1.5} /></ColorRight>
          </ColorBar>
        </DocColumn>

        <Hints>
          <HintsHead>Hints<HeadBtns><svg width="14" height="12" viewBox="0 0 14 12"><path d="M0 0l6 6-6 6zM7 0l6 6-6 6z" fill="#bdbdbd" /></svg><X size={14} strokeWidth={3} /></HeadBtns></HintsHead>
          <HintTabs><HintTab $on $w={63}>Topics</HintTab><HintTab $w={56}>Videos</HintTab></HintTabs>
          <HintBox>
            <HintContent>
              <HintTitle>HINTS<HelpMark>?</HelpMark></HintTitle>
              <HintHeading>Moving, scaling, and<br />stretching objects</HintHeading>
              <Para><Dot>•</Dot><div>To move an object, drag it. To constrain<br />the movement to the horizontal or<br />vertical axis, hold down <b>Ctrl</b> while<br />dragging.</div></Para>
              <Figure $cols={3} $cg={60} $rg={58} $t={18} $b={12} $l={59}>
                <Handle /><Handle /><Handle /><Handle /><X3 /><Handle /><Handle /><Handle /><Handle />
                <Cursor $x={21} $y={7}><svg width="16" height="16" viewBox="0 0 16 16"><path d="M8 0l3 3H9v4h4V5l3 3-3 3V9H9v4h2l-3 3-3-3h2V9H3v2L0 8l3-3v2h4V3H5z" fill="#111" /></svg></Cursor>
              </Figure>
              <Para><Dot>•</Dot><div>To nudge the object, press the <b>Arrow</b><br />keys.</div></Para>
              <Para $t={6}><Dot>•</Dot><div>To scale the object, drag one of the<br />corner sizing handles, holding down<br /><b>Shift</b> if you want to scale from the<br />center.</div></Para>
              <Figure $cols={2} $cg={80} $rg={69} $t={14} $b={25} $l={66}>
                <Handle /><Handle /><Handle /><X3 />
                <Cursor $x={-7} $y={-4}><svg width="16" height="16" viewBox="0 0 16 16"><path d="M2 2l12 12" stroke="#111" strokeWidth="2" /><path d="M1 1h6L1 7zM15 15H9l6-6z" fill="#111" /></svg></Cursor>
              </Figure>
              <Para><Dot>•</Dot><div>To stretch the object, drag one of the<br />stretching handles, holding down <b>Shift</b> if<br />you want to stretch from the center.</div></Para>
              <Para $t={3} $in={9}><Dot>•</Dot><div>The top and bottom stretching handles<br />stretch the object vertically.</div></Para>
              <Figure $cols={3} $cg={60} $rg={58} $t={18} $b={0} $l={59}>
                <Handle /><Handle /><Handle />
                <Cursor $x={73} $y={-4}><svg width="9" height="14" viewBox="0 0 9 14"><path d="M4.500 0l3 4H5.500v8H8v1.500H1V12h2.500V4h-2z" fill="#111" /></svg></Cursor>
              </Figure>
            </HintContent>
            <HintScroll>
              <HintCap $h={35} $pt={9}><ChevronUp size={25} strokeWidth={3.5} /></HintCap>
              <HintThumb />
              <Grow />
              <HintCap $h={47}><ChevronDown size={25} strokeWidth={3.5} /></HintCap>
            </HintScroll>
          </HintBox>
          <HintFoot>
            <svg width="14" height="16" viewBox="0 0 14 16"><path d="M7 1L1 7h2v8h8V7h2z" fill="#fff" stroke="#445" strokeWidth="1.300" /><path d="M3 9h8" stroke="#445" /></svg>
            <FootRight>
              <svg width="16" height="13" viewBox="0 0 16 13"><path d="M7 1L1 6.500 7 12V9h8V4H7z" fill="#e4e6ef" stroke="#67708a" /></svg>
              <svg width="16" height="13" viewBox="0 0 16 13"><path d="M9 1l6 5.500L9 12V9H1V4h8z" fill="#dcdcdc" /></svg>
            </FootRight>
          </HintFoot>
        </Hints>

        <Dock>
          <DockTab $h={86} $on>
            <svg width="20" height="16" viewBox="0 0 20 16"><path d="M1 1l9 9-4 .5 2 4-2 1-2-4-3 2z" fill="#e8eaf2" stroke="#667" /><text x="12" y="10" fontSize="12" fontWeight="700" fontFamily="Noto Sans" fill="#55607a">?</text></svg>
            <DockText>Hints</DockText>
          </DockTab>
          <DockTab $h={166}>
            <svg width="18" height="16" viewBox="0 0 18 16"><path d="M6 1l5 4-5 5-5-5z" fill="#f2c46a" stroke="#777" /><path d="M8 7h9v8H8z" fill="#8794a8" /></svg>
            <DockText>Object Properties</DockText>
          </DockTab>
          <DockTab $h={162}>
            <svg width="18" height="16" viewBox="0 0 18 16"><path d="M1 2h6v4H1zM10 2h6v4h-6zM1 10h6v4H1zM10 10h6v4h-6z" fill="none" stroke="#666" strokeDasharray="1.500 1" /></svg>
            <DockText>Object Manager</DockText>
          </DockTab>
          <DockPlus><PlusRound s={20} /></DockPlus>
        </Dock>

        <Palette>
          <PaletteTop>
            <PalDots />
            <ArrowRight $mt={9} />
            <DropperWrap $mt={3}><Dropper s={18} c="#b5b5b5" /></DropperWrap>
            <ChevronUp size={14} strokeWidth={3} />
          </PaletteTop>
          <Swatch $none><None w={19} h={19} /></Swatch>
          {paletteColors.map((c, i) => <Swatch key={i} $c={c} />)}
          <PalFoot>
            <ChevronDown size={16} strokeWidth={3} />
            <ChevronsRight size={16} strokeWidth={2} />
          </PalFoot>
        </Palette>
      </Workspace>

      <StatusBar>
        <StatusText>( 335.731, 332.569 )</StatusText>
        <StatusBox $ml={13} />
        <StatusBox $ml={1204} $t={-1} $c="#e6b0b0" />
        <StatusBox $ml={16} $t={-1} />
        <StatusBox $ml={14} $t={-1} />
        <StatusBox $ml={245} $t={-1} $c="#141414" $w={22} />
        <StatusText $ml={5}>C:0 M:0 Y:0 K:100  0.200 mm</StatusText>
      </StatusBar>
    </Shell>
  );
}
